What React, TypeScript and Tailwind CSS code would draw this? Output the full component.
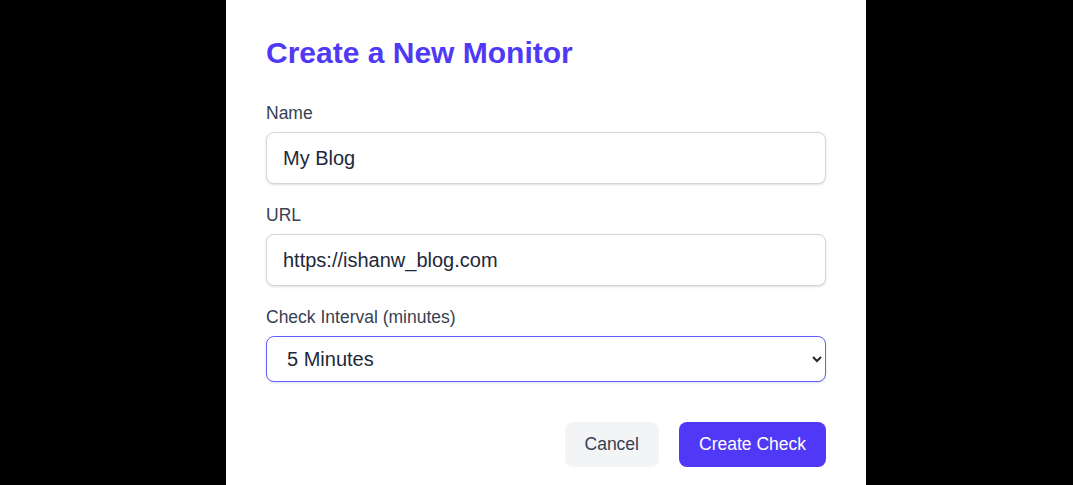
import React from "react";

export default function App() {
  return (
    <div
      className="h-[485px] w-full overflow-hidden bg-black"
      style={{ fontFamily: '"Liberation Sans", Arial, sans-serif' }}
    >
      <div className="ml-[226px] h-full w-[640px] bg-white px-10 pt-[35px]">
        <h2 className="mb-[29px] text-[30px] font-bold leading-[36px] text-[#4f39f6]">
          Create a New Monitor
        </h2>

        <div className="mb-[18px]">
          <label className="mb-1.5 block text-[17.5px] leading-[26px] text-gray-700">Name</label>
          <input
            readOnly
            value="My Blog"
            className="block h-[52px] w-full rounded-lg border border-gray-300 bg-white px-4 text-xl text-gray-800 shadow-sm outline-none"
          />
        </div>

        <div className="mb-[18px]">
          <label className="mb-1.5 block text-[17.5px] leading-[26px] text-gray-700">URL</label>
          <input
            readOnly
            value="https://ishanw_blog.com"
            className="block h-[52px] w-full rounded-lg border border-gray-300 bg-white px-4 text-xl text-gray-800 shadow-sm outline-none"
          />
        </div>

        <div>
          <label className="mb-1.5 block text-[17.5px] leading-[26px] text-gray-700">
            Check Interval (minutes)
          </label>
          <select
            defaultValue="5"
            className="block h-[46px] w-full rounded-lg border border-indigo-500 bg-white px-4 text-xl text-gray-800 shadow-sm outline-none"
          >
            <option value="1">1 Minute</option>
            <option value="5">5 Minutes</option>
            <option value="10">10 Minutes</option>
            <option value="30">30 Minutes</option>
          </select>
        </div>

        <div className="mt-10 flex justify-end gap-5">
          <button className="h-[45px] rounded-lg bg-gray-100 px-5 text-[17.5px] text-gray-700">
            Cancel
          </button>
          <button className="h-[45px] rounded-lg bg-[#4f39f6] px-5 text-[17.5px] text-white">
            Create Check
          </button>
        </div>
      </div>
    </div>
  );
}
